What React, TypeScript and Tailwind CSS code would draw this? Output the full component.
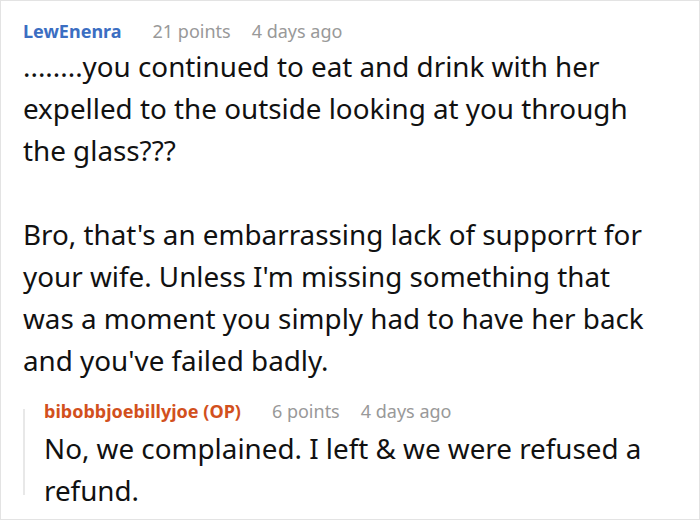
import React from "react";

export default function App() {
  return (
    <div className="w-[700px] h-[520px] bg-white border border-[#e3e3e3] overflow-hidden box-border" style={{ fontFamily: '"Noto Sans", sans-serif' }}>
      <div className="pl-[22px] pt-[18px] pr-[44px]">
        <div className="flex items-baseline text-[18px] leading-[24px]">
          <span className="font-bold text-[#3b6ec2]">LewEnenra</span>
          <span className="ml-[31px] text-[#999999]">21 points</span>
          <span className="ml-[21px] text-[#999999]">4 days ago</span>
        </div>
        <div className="mt-[2px] text-[27.8px] leading-[42px] text-[#111111]">
          <p>........you continued to eat and drink with her expelled to the outside looking at you through the glass???</p>
          <p className="mt-[42px]">Bro, that's an embarrassing lack of supporrt for your wife. Unless I'm missing something that was a moment you simply had to have her back and you've failed badly.</p>
        </div>
        <div className="mt-[18px] flex">
          <div className="w-[2px] bg-[#e8e8e8] mt-[10px] mb-[16px] shrink-0" />
          <div className="pl-[19px]">
            <div className="flex items-baseline text-[18px] leading-[24px]">
              <span className="font-bold text-[#d2501d]">bibobbjoebillyjoe (OP)</span>
              <span className="ml-[31px] text-[#999999]">6 points</span>
              <span className="ml-[21px] text-[#999999]">4 days ago</span>
            </div>
            <div className="mt-[4px] text-[27.8px] leading-[42px] text-[#111111]">
              <p>No, we complained. I left &amp; we were refused a refund.</p>
            </div>
          </div>
        </div>
      </div>
    </div>
  );
}
